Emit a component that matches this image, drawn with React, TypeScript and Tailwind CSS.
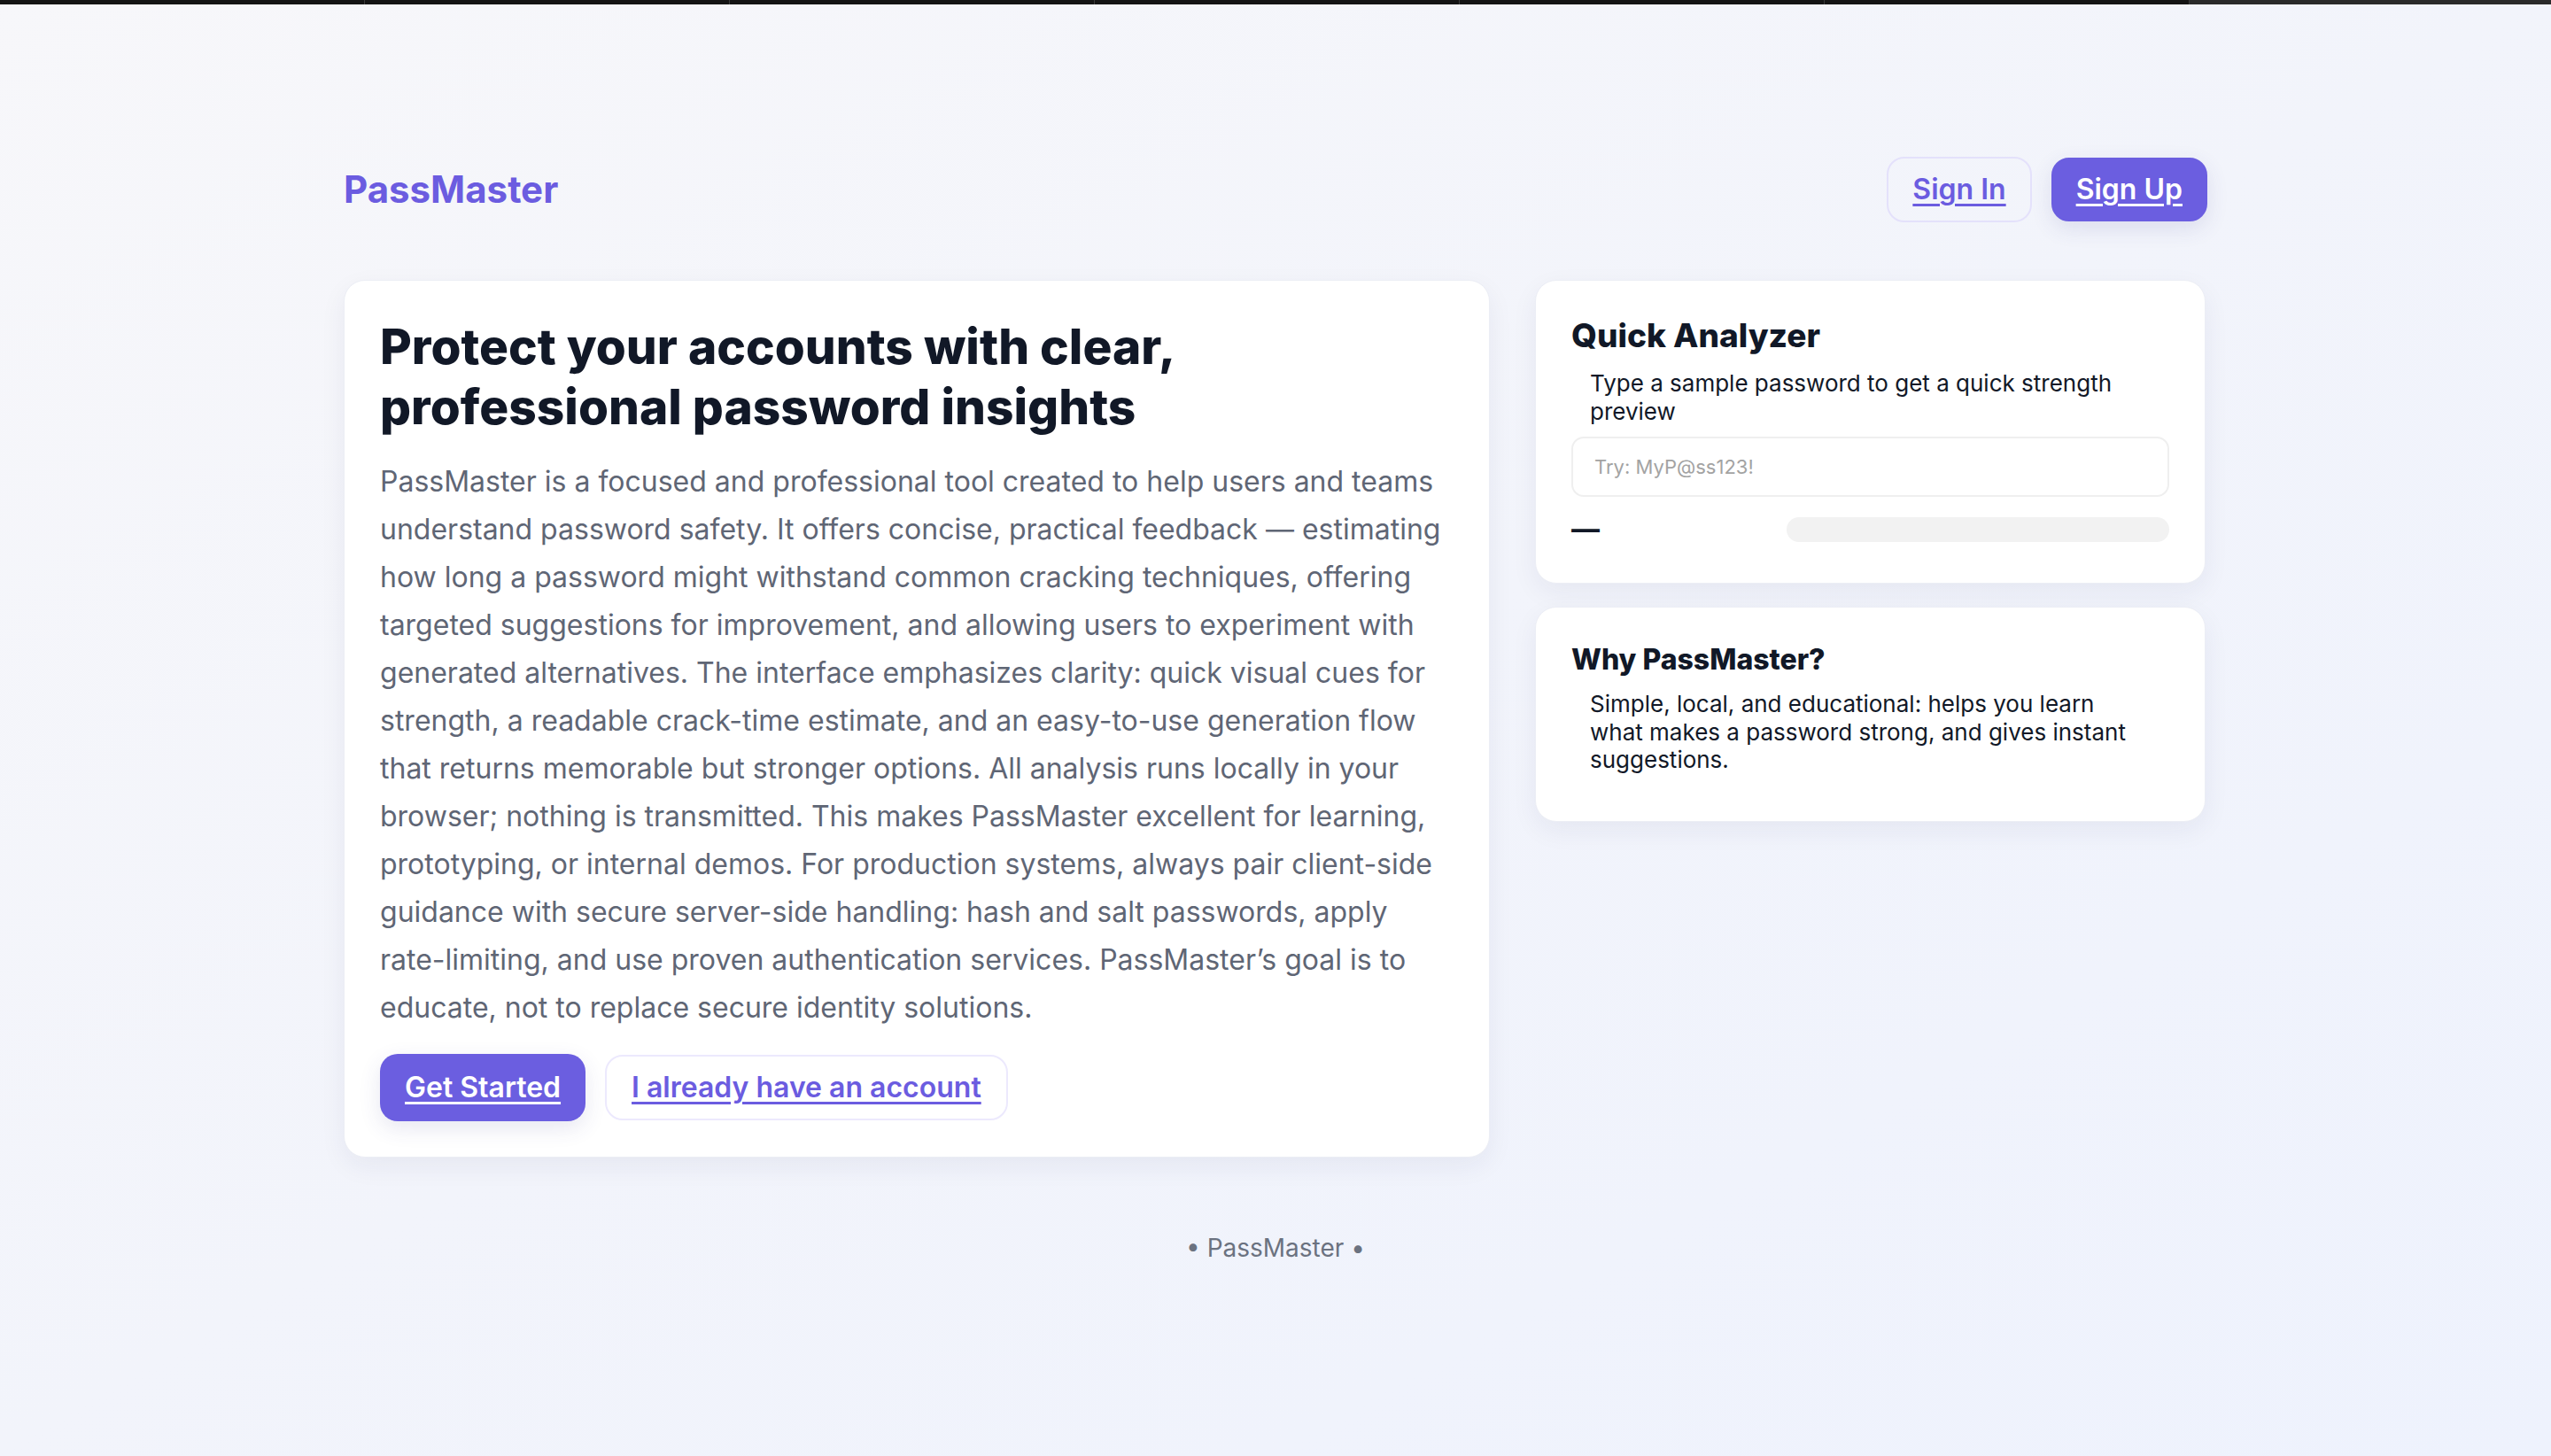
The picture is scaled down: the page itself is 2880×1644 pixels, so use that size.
import { useState } from "react";

// landing page for the password analyzer demo
export default function App() {
  const [pw, setPw] = useState("");

  return (
    <div className="min-h-screen w-full bg-linear-to-br from-[#f7f7fa] via-[#f2f4fb] to-[#eef2fd] font-['Inter',sans-serif]">
      <div className="flex h-[5px] w-full bg-[#141414]">
        {[0, 1, 2, 3, 4, 5].map((i) => (
          <div key={i} className="h-full w-[412px] border-r border-[#3a3a3a]" />
        ))}
        <div className="h-full flex-1 bg-[#2a2a2a]" />
      </div>

      <div className="mx-auto w-[2104px] pt-[172px]">
        <header className="flex items-center justify-between">
          <div className="text-[42px] font-bold leading-none text-[#6b5ce0]">PassMaster</div>
          <nav className="flex items-center gap-[22px]">
            <a
              href="#"
              className="flex h-[74px] items-center rounded-[20px] border-2 border-[#e4e1fb] px-[27px] text-[32px] font-semibold text-[#6b5ce0] underline underline-offset-[5px]"
            >
              Sign In
            </a>
            <a
              href="#"
              className="flex h-[72px] items-center rounded-[20px] border-2 border-[#6b5ee0] bg-[#6b5ee0] px-[26px] text-[32px] font-semibold text-white underline underline-offset-[5px] shadow-[0_8px_24px_rgba(60,60,140,0.12)]"
            >
              Sign Up
            </a>
          </nav>
        </header>

        <main className="mt-[65px] grid grid-cols-[1294px_757px] items-start gap-[51px]">
          <section className="rounded-[24px] border border-[#eceef5] bg-white p-[40px] shadow-[0_10px_30px_rgba(30,40,90,0.06)]">
            <h1 className="max-w-[1160px] text-[55px] font-extrabold leading-[68px] text-[#111827]">
              Protect your accounts with clear, professional password insights
            </h1>
            <p className="mt-[24px] text-[32px] leading-[54px] text-[#5f6675]">
              PassMaster is a focused and professional tool created to help users and teams understand
              password safety. It offers concise, practical feedback — estimating how long a password might
              withstand common cracking techniques, offering targeted suggestions for improvement, and
              allowing users to experiment with generated alternatives. The interface emphasizes clarity:
              quick visual cues for strength, a readable crack-time estimate, and an easy-to-use generation
              flow that returns memorable but stronger options. All analysis runs locally in your browser;
              nothing is transmitted. This makes PassMaster excellent for learning, prototyping, or internal
              demos. For production systems, always pair client-side guidance with secure server-side
              handling: hash and salt passwords, apply rate-limiting, and use proven authentication
              services. PassMaster’s goal is to educate, not to replace secure identity solutions.
            </p>
            <div className="mt-[25px] flex items-center gap-[22px]">
              <a
                href="#"
                className="flex h-[76px] items-center rounded-[20px] bg-[#6b5ee0] px-[28px] text-[32px] font-semibold text-white underline underline-offset-[5px] shadow-[0_8px_24px_rgba(60,60,140,0.12)]"
              >
                Get Started
              </a>
              <a
                href="#"
                className="flex h-[74px] items-center rounded-[20px] border-2 border-[#ece9fd] bg-white px-[28px] text-[32px] font-semibold text-[#6b5ce0] underline underline-offset-[5px]"
              >
                I already have an account
              </a>
            </div>
          </section>

          <aside className="flex flex-col gap-[26px]">
            <div className="rounded-[24px] border border-[#eceef5] bg-white p-[40px] shadow-[0_10px_30px_rgba(30,40,90,0.06)]">
              <h2 className="text-[37px] font-extrabold leading-[43px] text-[#111827]">Quick Analyzer</h2>
              <p className="mx-[21px] mt-[17px] text-[26px] leading-[31.5px] text-[#111827]">
                Type a sample password to get a quick strength preview
              </p>
              <input
                value={pw}
                onChange={(e) => setPw(e.target.value)}
                placeholder="Try: MyP@ss123!"
                className="mt-[13px] h-[68px] w-full rounded-[14px] border-2 border-[#efefef] bg-white px-[24px] text-[22px] text-[#111827] outline-none placeholder:text-[#a3a3a3]"
              />
              <div className="mt-[17px] flex h-[40px] items-center justify-between">
                <span className="text-[32px] font-bold leading-none text-[#111827]">—</span>
                <div className="h-[28px] w-[432px] rounded-full bg-[#f2f2f2]" />
              </div>
            </div>

            <div className="rounded-[24px] border border-[#eceef5] bg-white p-[40px] pb-[53px] shadow-[0_10px_30px_rgba(30,40,90,0.06)]">
              <h2 className="text-[32px] font-extrabold leading-[37px] text-[#111827]">Why PassMaster?</h2>
              <p className="mx-[21px] mt-[16px] text-[26px] leading-[31.5px] text-[#111827]">
                Simple, local, and educational: helps you learn what makes a password strong, and gives
                instant suggestions.
              </p>
            </div>
          </aside>
        </main>

        <footer className="mt-[85px] pb-[200px] text-center text-[28px] leading-[34px] text-[#6b7280]">
          • PassMaster •
        </footer>
      </div>
    </div>
  );
}
